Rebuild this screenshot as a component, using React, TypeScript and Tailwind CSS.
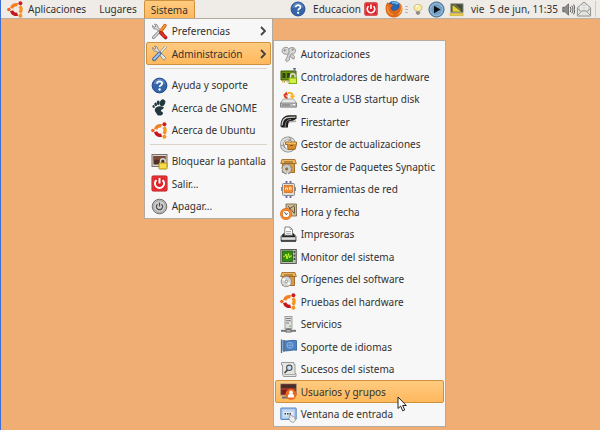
import type { ReactNode } from "react"
import { clsx } from "clsx"

interface IconProps {
  className?: string
}

interface MenuEntry {
  label: string
  icon: (props: IconProps) => ReactNode
}

function Glyph({ className = "size-[17px]", children }: IconProps & { children: ReactNode }) {
  return (
    <svg viewBox="0 0 17 17" fill="none" aria-hidden="true" className={clsx("shrink-0", className)}>
      {children}
    </svg>
  )
}

function UbuntuIcon({ className }: IconProps) {
  return (
    <Glyph className={className}>
      <path d="M4.600 7.300A4.900 4.900 0 0 1 10.600 3.800" stroke="#f57f20" strokeWidth="3.400" />
      <path d="M12.800 5.200A4.900 4.900 0 0 1 12.800 11.800" stroke="#f7941d" strokeWidth="3.400" />
      <path d="M10.600 13.200A4.900 4.900 0 0 1 4.600 9.700" stroke="#c4161c" strokeWidth="3.400" />
      <circle cx="1.900" cy="8.500" r="1.800" fill="#f26522" />
      <circle cx="13.400" cy="2.200" r="2" fill="#cf1b22" />
      <circle cx="13.400" cy="14.800" r="2" fill="#f7941d" />
    </Glyph>
  )
}

function HelpIcon({ className }: IconProps) {
  return (
    <Glyph className={className}>
      <circle cx="8.5" cy="8.5" r="7.4" fill="#3465a9" stroke="#234a8c" />
      <path d="M2.5 7.5a6 6 0 0 1 12 0c-4-1.500-8-1.500-12 0Z" fill="#7296ca" opacity=".6" />
      <path d="M6 6.700c0-3.300 5.300-3.100 5.100-.1-.1 1.700-2.500 1.700-2.500 3.500" stroke="#fff" strokeWidth="1.800" />
      <circle cx="8.600" cy="12.500" r="1.200" fill="#fff" />
    </Glyph>
  )
}

function PowerSquareIcon({ className }: IconProps) {
  return (
    <Glyph className={className}>
      <rect x="1" y="1" width="15" height="15" rx="1" fill="#e01e24" stroke="#b80f15" />
      <rect x="2" y="2" width="13" height="13" stroke="#f0595b" strokeWidth=".7" />
      <path d="M5.500 5a4.600 4.600 0 1 0 6 0" stroke="#fff" strokeWidth="2" />
      <path d="M8.500 3v5.500" stroke="#fff" strokeWidth="2" />
    </Glyph>
  )
}

function PowerRoundIcon({ className }: IconProps) {
  return (
    <Glyph className={className}>
      <circle cx="8.500" cy="8.500" r="7.300" fill="#bcbcba" stroke="#70706e" />
      <circle cx="8.500" cy="8.500" r="5.800" fill="#d2d2d0" stroke="#9b9b99" strokeWidth=".7" />
      <path d="M6.500 6.200a3.100 3.100 0 1 0 4 0M8.500 4.500v4" stroke="#505050" strokeWidth="1.300" />
    </Glyph>
  )
}

function AdministrationIcon({ className }: IconProps) {
  return (
    <Glyph className={className}>
      <path d="M1.500 2.500c0 3 1.500 4 4 3.500l6.500 8.500c1.500 1.200 3.500-.5 2.500-2L7 4.500C7 2 5.500 1 3.500 1.200L5 3 4 4.500Z" fill="#e6e6e2" stroke="#777" strokeWidth=".8" />
      <path d="m15 1.500-5 5.500" stroke="#777" strokeWidth="2.600" />
      <path d="m15 1.500-5 5.500" stroke="#f6f6f3" strokeWidth="1.400" />
      <path d="m8.500 8.500-5.300 5.700" stroke="#456a9f" strokeWidth="4" strokeLinecap="round" />
      <path d="m8.300 8.700-5.100 5.300" stroke="#9dbce2" strokeWidth="2.200" strokeLinecap="round" />
    </Glyph>
  )
}

function PreferencesIcon({ className }: IconProps) {
  return (
    <Glyph className={className}>
      <path d="M1.500 2.500c0 3 1.500 4 4 3.500L11 12l2-2-6-5.500C7 2 5.500 1 3.500 1.200L5 3 4 4.500Z" fill="#dcdcd8" stroke="#777" strokeWidth=".8" />
      <path d="m8.500 8.500-6 6" stroke="#777" strokeWidth="3" strokeLinecap="round" />
      <path d="m8.500 8.500-6 6" stroke="#e3e3df" strokeWidth="1.500" strokeLinecap="round" />
      <path d="m14 2.500-4.500 6" stroke="#d45b0a" strokeWidth="3.400" strokeLinecap="round" />
      <path d="m14 2.500-4 5" stroke="#f79a33" strokeWidth="1.800" strokeLinecap="round" />
      <path d="m10 10 4.500 4.500" stroke="#b51212" strokeWidth="3.600" strokeLinecap="round" />
      <path d="m10 10 4 4" stroke="#e7402c" strokeWidth="1.700" strokeLinecap="round" />
    </Glyph>
  )
}

function GnomeIcon({ className }: IconProps) {
  return (
    <Glyph className={className}>
      <g fill="#22383f">
        <ellipse cx="11.500" cy="3.700" rx="2.700" ry="3.500" transform="rotate(20 11.500 3.700)" />
        <ellipse cx="7.200" cy="3.800" rx="1.500" ry="2.200" />
        <ellipse cx="4.600" cy="5.400" rx="1.300" ry="1.800" transform="rotate(-15 4.600 5.400)" />
        <ellipse cx="2.600" cy="7.600" rx="1.100" ry="1.500" transform="rotate(-25 2.600 7.600)" />
        <path d="M12.700 8.300C9.500 6 3.800 8 3.800 11c0 2 1.500 2.500 2 4 .8 2.300 6 2.200 6.200-.8.100-1.700-2.300-1.300-2-2.700.300-1.200 3.500-1.500 2.700-3.200Z" />
      </g>
    </Glyph>
  )
}

function LockScreenIcon({ className }: IconProps) {
  return (
    <Glyph className={className}>
      <rect x="1" y="1.500" width="15" height="12" fill="#d9d6cf" stroke="#77736c" />
      <rect x="2.500" y="3" width="12" height="8.500" fill="#503026" />
      <path d="M2.500 8c4-3 8 1 12-2V3h-12Z" fill="#7a4836" />
      <path d="M9.500 10V8a2.300 2.300 0 0 1 4.600 0v2" stroke="#d8d8d2" strokeWidth="1.500" />
      <rect x="8" y="10" width="8" height="6" rx=".5" fill="#f4dc4c" stroke="#b49412" />
    </Glyph>
  )
}

function KeysIcon({ className }: IconProps) {
  return (
    <Glyph className={className}>
      <g stroke="#8f8f8d" fill="#d7d7d5">
        <path d="M5 1.500c3-.8 5 1.500 4.200 3.800l5.300 5-.5 2.700-2-.5-.5-1.500-1.500-.3L7.500 8C4 9 1.500 6.500 2 4.500 2.500 2.500 3.500 1.800 5 1.500Z" strokeWidth=".9" />
        <path d="M10 2c3-1.500 6 .3 5.500 3.300-.3 2-2.500 3.200-4.500 2.700L9 12l1 1-1 1.300-2 1.200-1.500-1L9.200 6C8.500 4 8.800 2.800 10 2Z" strokeWidth=".9" />
      </g>
      <circle cx="4.700" cy="4.300" r="1.100" fill="#8b8b89" />
      <circle cx="12.700" cy="3.600" r="1.100" fill="#8b8b89" />
    </Glyph>
  )
}

function HardwareIcon({ className }: IconProps) {
  return (
    <Glyph className={className}>
      <path d="M1 3h15v9H1Z" fill="#6d9310" stroke="#3e5c06" />
      <path d="M2.500 5h3v5h-3ZM7 5h3v5H7Z" fill="#314016" />
      <path d="M2 13h1v1.500M4.500 13v1.500M7 13v1.500" stroke="#c79d24" />
      <path d="M14.500.5v4M16 .5h-3" stroke="#777" strokeWidth="1.500" />
      <path d="M10.500 10V8a2.300 2.300 0 0 1 4.600 0v2" stroke="#deded8" strokeWidth="1.500" />
      <rect x="9" y="10" width="7.500" height="5.500" fill="#d6ed48" stroke="#7fae13" />
    </Glyph>
  )
}

function UsbDiskIcon({ className }: IconProps) {
  return (
    <Glyph className={className}>
      <path d="M3.500 8h10l3 4v4H.5v-4Z" fill="#e9e9e7" stroke="#949492" strokeWidth=".8" />
      <path d="M.5 12h16v4H.5Z" fill="#b9b9b6" stroke="#777" strokeWidth=".7" />
      <path d="M2 14h8" stroke="#6d6d6b" />
      <path d="M13 13.500h2" stroke="#fff" />
      <path d="M7.500 7C5 6.500 4 5 5 3.500" stroke="#e23b1d" strokeWidth="1.800" />
      <path d="m3 4.200 3.500-3.700 1.600 4Z" fill="#e23b1d" />
      <path d="M8 2c3-.7 5 .3 4.500 3" stroke="#f5a81b" strokeWidth="1.800" />
      <path d="m9.500 4.500 5.700.3-2.900 3.400Z" fill="#f5b720" />
    </Glyph>
  )
}

function FirestarterIcon({ className }: IconProps) {
  return (
    <Glyph className={className}>
      <path d="M.5 13.500C.5 6 4 2.500 9 2.300h7.500v3.500l-4 2.200C9 7.500 8 9.500 8 14.500H2Z" fill="#1d1d1d" />
      <path d="M2 12.500C2.200 7 5 4.500 9 4.400l6.500-.2" stroke="#d0d0ce" strokeWidth="1.200" />
      <path d="M5.200 14C5.200 9 7 6.500 11 6.500" stroke="#8d8d8b" />
      <path d="M9 9.200c2-1.700 4 0 7-1.200" stroke="#a9a9a7" strokeWidth="1.500" />
    </Glyph>
  )
}

function UpdatesIcon({ className }: IconProps) {
  return (
    <Glyph className={className}>
      <circle cx="8" cy="8.500" r="6.200" stroke="#858583" strokeWidth="3.600" />
      <circle cx="8" cy="8.500" r="6.200" stroke="#dededb" strokeWidth="2.300" />
      <path d="m9 .8 2 3-3.500 1.500M1 10l3-1.500 1 3.500" stroke="#868684" strokeWidth=".9" />
      <path d="M5.500 6h11v2.500L15 13.500H8L7.500 8.500h-2Z" fill="#d58c2c" stroke="#925712" strokeWidth=".8" />
      <path d="M6.200 6.500h9.800v1.500H6.200Z" fill="#f1bd66" />
      <path d="M10 9.500h3" stroke="#8a5517" />
    </Glyph>
  )
}

function PackageBox() {
  return (
    <>
      <path d="M2.500 5.500h12v9h-12Z" fill="#d99a40" stroke="#8c5a18" strokeWidth=".8" />
      <path d="M2 1.500h13l1.300 4H.7Z" fill="#efb961" stroke="#94611c" strokeWidth=".8" />
      <path d="M4 4h9" stroke="#8a5312" />
    </>
  )
}

function SynapticIcon({ className }: IconProps) {
  return (
    <Glyph className={className}>
      <PackageBox />
      <circle cx="6.700" cy="11" r="4.500" stroke="#8a8a88" strokeWidth="2" strokeDasharray="2.200 1.300" />
      <circle cx="6.700" cy="11" r="3.200" fill="#eee" stroke="#c9c9c7" strokeWidth="2.200" />
      <circle cx="6.700" cy="11" r="1.400" fill="#a06b2a" stroke="#777" strokeWidth=".6" />
    </Glyph>
  )
}

function SourcesIcon({ className }: IconProps) {
  return (
    <Glyph className={className}>
      <PackageBox />
      <circle cx="6.300" cy="10.500" r="5.200" fill="#d6d6d4" stroke="#818180" strokeWidth=".8" />
      <path d="m6.300 10.500-3.500-3M6.300 10.500l3.700 3" stroke="#fff" strokeWidth="1.800" />
      <circle cx="6.300" cy="10.500" r="1.300" fill="#fff" stroke="#777" strokeWidth=".8" />
    </Glyph>
  )
}

function NetworkIcon({ className }: IconProps) {
  return (
    <Glyph className={className}>
      <path d="M6.500 0v3M10.500 0v3M6.500 14v3M10.500 14v3" stroke="#5b65b4" strokeWidth="1.800" />
      <rect x="2.500" y="2.500" width="12" height="12" rx="1" fill="#dededb" stroke="#878785" />
      <rect x="4.500" y="4.500" width="8" height="7" fill="#f38a31" stroke="#d06711" strokeWidth=".7" />
      <path d="M5.500 9V7h2v2M9.500 9V6.500H11V9" stroke="#ffe0bd" />
      <path d="M1.500 6v4M15.500 6v4" stroke="#8f8f8d" />
    </Glyph>
  )
}

function ClockIcon({ className }: IconProps) {
  return (
    <Glyph className={className}>
      <path d="M6 1h10.500v12H8L6 8Z" fill="#d2bd92" stroke="#6f624a" strokeWidth=".8" />
      <path d="m8 3 6 7M14.500 2.500 9 6M14.500 3.500v7" stroke="#5b4b38" strokeWidth=".9" />
      <circle cx="6" cy="11" r="4.600" fill="#fff" stroke="#ce610e" strokeWidth="2.600" />
      <circle cx="6" cy="11" r="4.600" stroke="#f78c2d" strokeWidth="1.800" />
      <path d="M4.500 9 6 11.500l1.800-1" stroke="#555" />
    </Glyph>
  )
}

function PrinterIcon({ className }: IconProps) {
  return (
    <Glyph className={className}>
      <path d="m3 8-2 2.500V15h15v-4.500L14 8Z" fill="#b4b4b2" stroke="#4b4b4b" strokeWidth=".8" />
      <path d="M3.500 7.500h10L15.500 11h-14Z" fill="#252525" />
      <path d="M5 1h5l2.500 2.500v5.700H4.500Z" fill="#fff" stroke="#666" strokeWidth=".8" />
      <path d="M10 1v2.500h2.500M6 5.500h5M6 7.300h5" stroke="#999" strokeWidth=".8" />
      <path d="M2 12.800h13" stroke="#f4f4f4" />
      <path d="M1 15h15" stroke="#333" strokeWidth="1.500" />
    </Glyph>
  )
}

function MonitorIcon({ className }: IconProps) {
  return (
    <Glyph className={className}>
      <rect x=".8" y="1.500" width="15.500" height="14" fill="#bcbcb7" stroke="#5d5d58" />
      <rect x="2.500" y="3" width="10" height="10.500" fill="#308c12" stroke="#23630e" strokeWidth=".8" />
      <path d="M3.500 8.500h1.300L6 6l1 5 1.500-5.500L9.500 10l.8-2H12" stroke="#c3f12d" />
      <path d="M14.500 3v2M14.500 6.500v2M14.500 10v2" stroke="#4a4a46" strokeWidth="1.700" />
    </Glyph>
  )
}

function ServicesIcon({ className }: IconProps) {
  return (
    <Glyph className={className}>
      <rect x="5" y=".5" width="7" height="12" fill="#dededc" stroke="#8e8e8c" strokeWidth=".8" />
      <path d="M6 2.500h5M6 4.700h5M6 7h3" stroke="#777" strokeWidth=".9" />
      <path d="M10 9.500v1.500" stroke="#49993c" />
      <path d="M1 14.800h15" stroke="#777774" strokeWidth="2" />
      <path d="M8.500 12.500v2" stroke="#666" strokeWidth="2" />
      <rect x="6" y="13.300" width="5" height="2.800" fill="#b6b6b2" stroke="#555" strokeWidth=".7" />
    </Glyph>
  )
}

function FlagIcon({ className }: IconProps) {
  return (
    <Glyph className={className}>
      <path d="M3 2.500c4 1.500 8-1 13.500.2v9.600C12 11 8 14 3 12.500Z" fill="#4c82c4" stroke="#315e99" strokeWidth=".8" />
      <circle cx="10" cy="7.300" r="3" stroke="#8db3df" strokeWidth=".9" />
      <path d="M10 4.300v6M7 7.300h6" stroke="#8db3df" strokeWidth=".7" />
      <path d="M1.500 1.500V15M4 2v12" stroke="#5c6570" strokeWidth="1.300" />
      <path d="M2.700 2v11" stroke="#7ea7d4" strokeWidth="1.300" />
    </Glyph>
  )
}

function LogIcon({ className }: IconProps) {
  return (
    <Glyph className={className}>
      <path d="M1.500 1.500h12.500v2H15v9h1v3H3.500L2.500 13V4h-1Z" fill="#e6e6e1" stroke="#90908c" strokeWidth=".9" />
      <path d="M4.500 13.500H15" stroke="#aaa" />
      <path d="m5 11.500 3-3" stroke="#444" strokeWidth="1.700" strokeLinecap="round" />
      <circle cx="9.300" cy="6.800" r="2.700" fill="#cde0f3" stroke="#4a5460" strokeWidth="1.100" />
    </Glyph>
  )
}

function UsersIcon({ className }: IconProps) {
  return (
    <Glyph className={className}>
      <rect x=".8" y="1" width="15.400" height="11" fill="#7d1f17" stroke="#85817a" strokeWidth=".8" />
      <path d="M1.200 1.500h14.600V5H1.200Z" fill="#4b2c26" />
      <path d="M1.500 6h14" stroke="#b5533c" />
      <path d="M2 14.500h7" stroke="#6f6d68" strokeWidth="2" />
      <circle cx="11" cy="11.300" r="5.500" fill="#ee661b" />
      <circle cx="11" cy="9.300" r="1.900" fill="#fff" />
      <path d="M7.800 14.500c0-3.500 1.500-4 3.200-4s3.200.5 3.200 4Z" fill="#fff" />
    </Glyph>
  )
}

function LoginWindowIcon({ className }: IconProps) {
  return (
    <Glyph className={className}>
      <rect x=".8" y="2" width="15.400" height="11.500" rx=".5" fill="#9fc0e8" stroke="#5a86bf" />
      <rect x="2.300" y="3.500" width="12.400" height="8.500" fill="#c1d8f2" />
      <path d="M3.500 6h10v3.500h-10Z" fill="#e5effa" />
      <path d="M4.500 7.800h7" stroke="#333" strokeWidth="1.500" strokeDasharray="1.500 1" />
      <path d="m9 8.500 2 1 3.500 1.500 1 3-2 2.500-3-1-2-3.500 1.500-.5Z" fill="#eee" stroke="#8d8d8d" strokeWidth=".7" />
    </Glyph>
  )
}

function FirefoxIcon({ className }: IconProps) {
  return (
    <Glyph className={className}>
      <circle cx="8.500" cy="8" r="7" fill="#235ca8" />
      <path d="M6 2c2-1 5-1 7 1l-2 2-3-.5Z" fill="#67b4e8" />
      <path d="M1 4.500 2.500 2 4 4c2-.8 3 .2 3.500 1.500L5.500 7c0 3 3 4 5.500 2.500 3-1.500 3-4 1.800-7C16.500 4 17.500 9 15.500 12.500 13 16.500 8 17.500 4.500 15.500.5 13 0 8.500 1 4.500Z" fill="#e0661a" />
      <path d="M7.500 3.500c3-1 5 1.500 4.300 4-.8 2-3.300 2.500-5 1.200L6 7l2-1Z" fill="#2a67b3" />
      <path d="M14.500 4.500c1.500 4 0 8-3.500 9.500 2.500 0 4.500-2 5-5 .2-2-.5-3.500-1.500-4.500Z" fill="#f9c440" />
      <path d="M2.500 6C2 10 4 13 7.500 14" stroke="#f39a2f" strokeWidth="1.300" />
    </Glyph>
  )
}

function BulbIcon({ className }: IconProps) {
  return (
    <Glyph className={className}>
      <path d="M5.500 11.500C3.500 9.500 2.500 7.500 3 5.500 4.300 1 12.700 1 14 5.500c.5 2-.5 4-2.500 6Z" fill="#f8eda4" stroke="#bda657" />
      <path d="M6 5.500c.5-1.300 1.500-2 3-2" stroke="#fff" strokeWidth="1.800" />
      <path d="M6 12.500h5v2.500l-2.500 1.500L6 15Z" fill="#99958c" stroke="#666" strokeWidth=".7" />
    </Glyph>
  )
}

function PlayIcon({ className }: IconProps) {
  return (
    <Glyph className={className}>
      <circle cx="8.500" cy="8.500" r="7.600" fill="#729fc6" stroke="#486a8b" />
      <circle cx="8.500" cy="8.500" r="6" stroke="#9dc0dc" />
      <path d="m6 4.800 6.500 3.700L6 12.200Z" fill="#0c1014" />
    </Glyph>
  )
}

function DisplayIcon({ className }: IconProps) {
  return (
    <Glyph className={className}>
      <path d="M2 2h14v10H2Z" fill="#454c3b" stroke="#9a9a8d" />
      <path d="m4 3.500 10 7.500H4Z" fill="#e8d137" />
      <path d="m6 3 7 6" stroke="#8c8d3b" strokeWidth="1.200" />
      <path d="M1 13h15v2.500H1Z" fill="#eccb35" stroke="#baa03b" strokeWidth=".6" />
    </Glyph>
  )
}

function SpeakerIcon({ className }: IconProps) {
  return (
    <Glyph className={className}>
      <path d="M1 5.500h3L8.500 1v15L4 11.500H1Z" fill="#8b8b88" stroke="#555" strokeWidth=".9" />
      <path d="M10.500 5c1.500 2 1.500 5 0 7M12.800 3.500c2 3 2 7 0 10M15.200 2c2 4 2 9 0 13" stroke="#555" strokeWidth="1.300" />
    </Glyph>
  )
}

function MailIcon({ className }: IconProps) {
  return (
    <Glyph className={className}>
      <path d="M1.500 7 8.500 1l7 6v9h-14Z" fill="#e2e2df" stroke="#8d8d8a" />
      <path d="M4 4.500h9v6H4Z" fill="#fff" stroke="#b5b5b2" strokeWidth=".8" />
      <path d="M5.500 6.500h6M5.500 8.500h6" stroke="#b3b3b3" strokeWidth=".8" />
      <path d="m1.500 15.500 5-5h4l5 5M1.500 8l4 3M15.500 8l-4 3" stroke="#999996" />
    </Glyph>
  )
}

function Chevron() {
  return (
    <svg viewBox="0 0 6 10" fill="none" aria-hidden="true" className="ml-auto h-2.5 w-1.5 shrink-0">
      <path d="m1 1 4 4-4 4" stroke="#44423f" strokeWidth="1.800" />
    </svg>
  )
}

function Pointer() {
  return (
    <svg viewBox="0 0 10 16" aria-hidden="true" className="pointer-events-none absolute top-4 left-[122px] z-10 h-4 w-2.5">
      <path d="M1 1v11.500l2.700-2.400 2 4.700 2-.9-2-4.400h3.600Z" fill="#fff" stroke="#222" />
    </svg>
  )
}

const helpItems: MenuEntry[] = [
  { label: "Ayuda y soporte", icon: HelpIcon },
  { label: "Acerca de GNOME", icon: GnomeIcon },
  { label: "Acerca de Ubuntu", icon: UbuntuIcon },
]

const sessionItems: MenuEntry[] = [
  { label: "Bloquear la pantalla", icon: LockScreenIcon },
  { label: "Salir...", icon: PowerSquareIcon },
  { label: "Apagar...", icon: PowerRoundIcon },
]

const adminItems: MenuEntry[] = [
  { label: "Autorizaciones", icon: KeysIcon },
  { label: "Controladores de hardware", icon: HardwareIcon },
  { label: "Create a USB startup disk", icon: UsbDiskIcon },
  { label: "Firestarter", icon: FirestarterIcon },
  { label: "Gestor de actualizaciones", icon: UpdatesIcon },
  { label: "Gestor de Paquetes Synaptic", icon: SynapticIcon },
  { label: "Herramientas de red", icon: NetworkIcon },
  { label: "Hora y fecha", icon: ClockIcon },
  { label: "Impresoras", icon: PrinterIcon },
  { label: "Monitor del sistema", icon: MonitorIcon },
  { label: "Orígenes del software", icon: SourcesIcon },
  { label: "Pruebas del hardware", icon: UbuntuIcon },
  { label: "Servicios", icon: ServicesIcon },
  { label: "Soporte de idiomas", icon: FlagIcon },
  { label: "Sucesos del sistema", icon: LogIcon },
  { label: "Usuarios y grupos", icon: UsersIcon },
  { label: "Ventana de entrada", icon: LoginWindowIcon },
]

interface MenuItemProps extends MenuEntry {
  active?: boolean
  hasSubmenu?: boolean
  children?: ReactNode
}

function MenuItem({ label, icon: Icon, active, hasSubmenu, children }: MenuItemProps) {
  return (
    <li className="relative odd:h-[22px] even:h-[23px]">
      <button
        type="button"
        aria-haspopup={hasSubmenu ? "menu" : undefined}
        className={clsx(
          "flex h-full w-full items-center gap-1 rounded-[2px] border px-1 text-left whitespace-nowrap",
          active ? "border-[#d0913f] bg-linear-to-b from-[#ffcb80] to-[#ffb85c]" : "border-transparent"
        )}
      >
        <Icon />
        {label}
        {hasSubmenu && <Chevron />}
      </button>
      {children}
    </li>
  )
}

function MenuGroup({ items }: { items: MenuEntry[] }) {
  return (
    <ul>
      {items.map((item) => (
        <MenuItem key={item.label} {...item} />
      ))}
    </ul>
  )
}

function Separator() {
  return <hr className="mx-1 mt-[3px] mb-[5px] border-[#dcd3c8]" />
}

function AdminMenu() {
  return (
    <ul className="absolute -top-0.5 left-full ml-0.5 w-[173px] border border-[#b3aaa0] bg-[#f7f7f7] px-px pt-0.5 pb-px">
      {adminItems.map((item) => {
        const active = item.label === "Usuarios y grupos"
        return (
          <MenuItem key={item.label} {...item} active={active}>
            {active && <Pointer />}
          </MenuItem>
        )
      })}
    </ul>
  )
}

function SystemMenu() {
  return (
    <div className="absolute top-full left-0 w-[129px] border border-[#b3aaa0] bg-[#f7f7f7] p-px">
      <ul>
        <MenuItem label="Preferencias" icon={PreferencesIcon} hasSubmenu />
        <MenuItem label="Administración" icon={AdministrationIcon} hasSubmenu active>
          <AdminMenu />
        </MenuItem>
      </ul>
      <Separator />
      <MenuGroup items={helpItems} />
      <Separator />
      <MenuGroup items={sessionItems} />
    </div>
  )
}

function Panel() {
  return (
    <header className="flex h-[19px] items-stretch justify-between border-b border-[#b9aea2] bg-[#efebe7] whitespace-nowrap">
      <nav className="flex items-stretch">
        <button type="button" className="flex items-center gap-1 pl-1.5">
          <UbuntuIcon />
          Aplicaciones
        </button>
        <button type="button" className="pr-[7px] pl-[13px]">
          Lugares
        </button>
        <div className="relative flex">
          <button
            type="button"
            aria-haspopup="menu"
            aria-expanded="true"
            className="rounded-t-[2px] border border-b-0 border-[#d0913f] bg-linear-to-b from-[#ffcb80] to-[#ffb85c] px-1.5"
          >
            Sistema
          </button>
          <SystemMenu />
        </div>
      </nav>

      <div className="flex items-center pr-1">
        <button type="button" aria-label="Ayuda">
          <HelpIcon className="size-4" />
        </button>
        <button type="button" className="ml-[7px] flex items-center gap-[3px]">
          Educacion
          <PowerSquareIcon className="size-[14px]" />
        </button>
        <button type="button" aria-label="Firefox" className="ml-[7px]">
          <FirefoxIcon className="size-[18px]" />
        </button>
        <span className="ml-0.5 flex flex-col gap-0.5">
          <i className="h-px w-[3px] bg-[#bbb3aa]" />
          <i className="h-px w-[3px] bg-[#bbb3aa]" />
          <i className="h-px w-[3px] bg-[#bbb3aa]" />
        </span>
        <button type="button" aria-label="Consejo" className="ml-1">
          <BulbIcon className="size-3" />
        </button>
        <button type="button" aria-label="Reproducir" className="ml-1">
          <PlayIcon />
        </button>
        <button type="button" aria-label="Pantalla" className="ml-1">
          <DisplayIcon className="size-[15px]" />
        </button>
        <button type="button" className="ml-[7px] whitespace-pre">
          {"vie  5 de jun, 11:35"}
        </button>
        <button type="button" aria-label="Volumen" className="ml-1">
          <SpeakerIcon className="size-[13px]" />
        </button>
        <button type="button" aria-label="Correo" className="ml-px">
          <MailIcon className="size-4" />
        </button>
        <span className="ml-[3px] h-4 w-px bg-[#d2cac1]" />
      </div>
    </header>
  )
}

export default function App() {
  return (
    <div className="min-h-screen border-l border-[#3c6fd0] bg-[#f0ad74] font-['Noto_Sans','DejaVu_Sans',sans-serif] text-[10px] leading-4 text-[#33312f]">
      <Panel />
    </div>
  )
}
